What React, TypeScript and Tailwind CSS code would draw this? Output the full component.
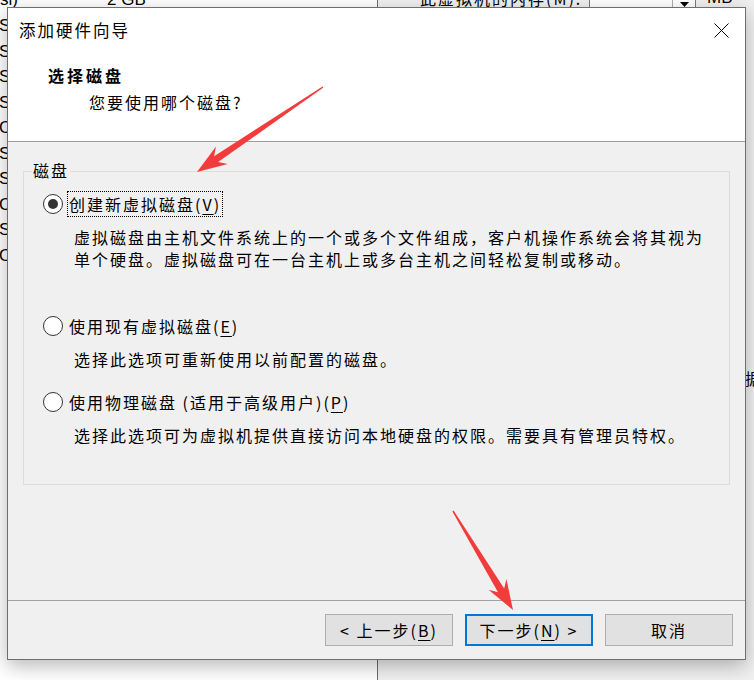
import React from "react";

const FONT = "font-['Noto_Sans_CJK_SC','Noto_Sans',sans-serif]";

// tapered red annotation arrow, tail -> tip
const arrowPoints = (x1: number, y1: number, x2: number, y2: number) => {
  const dx = x2 - x1;
  const dy = y2 - y1;
  const len = Math.hypot(dx, dy);
  const ux = dx / len;
  const uy = dy / len;
  const px = -uy;
  const py = ux;
  const pt = (d: number, w: number) =>
    `${(x2 - ux * d + px * w).toFixed(1)},${(y2 - uy * d + py * w).toFixed(1)}`;
  const head = 30;
  const neck = 23;
  return [
    pt(len, 0.7),
    pt(neck, 3.6),
    pt(head, 10.5),
    pt(0, 0),
    pt(head, -10.5),
    pt(neck, -3.6),
    pt(len, -0.7),
  ].join(" ");
};

const Key = ({ k }: { k: string }) => (
  <span className="underline underline-offset-[3px] decoration-1">{k}</span>
);

const Radio = ({ checked }: { checked?: boolean }) => (
  <div className="w-[20px] h-[20px] rounded-full border border-[#333333] bg-white flex items-center justify-center shrink-0">
    {checked && <div className="w-[10px] h-[10px] rounded-full bg-[#333333]" />}
  </div>
);

const Option = ({
  checked,
  label,
  lines,
  className,
}: {
  checked?: boolean;
  label: React.ReactNode;
  lines: string[];
  className?: string;
}) => (
  <div className={className}>
    <div className="flex items-center h-[26px]">
      <Radio checked={checked} />
      <span
        className={`ml-[4px] h-[26px] px-[1px] leading-[24px] border border-dotted ${
          checked ? "border-black" : "border-transparent"
        }`}
      >
        {label}
      </span>
    </div>
    <div className="ml-[31px] mt-[9px] leading-[22px]">
      {lines.map((l) => (
        <div key={l}>{l}</div>
      ))}
    </div>
  </div>
);

const Btn = ({ children, focused }: { children: React.ReactNode; focused?: boolean }) => (
  <button
    className={`w-[128px] h-[32px] bg-[#e1e1e1] flex items-center justify-center text-[16px] tracking-[2px] ${
      focused ? "border-2 border-[#0078d7]" : "border border-[#adadad]"
    }`}
  >
    {children}
  </button>
);

const leftRows = ["S:", "S:", "S:", "S:", "C:", "S:", "S:", "C:", "S:", "O"];

export default function App() {
  return (
    <div className={`relative w-[754px] h-[680px] overflow-hidden bg-white text-black ${FONT}`}>
      {/* settings window underneath */}
      <div className="absolute inset-0 flex font-['Liberation_Sans',sans-serif] text-[17px]">
        <div className="w-[378px] shrink-0 bg-white border-r border-[#6d6d6d] flex flex-col">
          <div className="h-[20px] -mt-[10px] flex items-center">
            <span className="w-[107px]">si)</span>
            <span>2 GB</span>
          </div>
          <div className="flex flex-col mt-[3px]">
            {leftRows.map((r, i) => (
              <div key={i} className="h-[25.5px] leading-[25px] -ml-[1px]">
                {r}
              </div>
            ))}
          </div>
        </div>
        <div className="flex-1 min-w-0 bg-[#f0f0f0] flex flex-col">
          <div className="h-[22px] -mt-[13px] flex items-center">
            <span className={`ml-[42px] w-[169px] shrink-0 text-[16px] tracking-[2px] ${FONT}`}>此虚拟机的内存(M):</span>
            <div className="h-[22px] w-[107px] shrink-0 border border-[#7a7a7a] bg-white flex justify-end">
              <div className="w-[23px] border-l border-[#adadad] flex items-end justify-center pb-[1px]">
                <svg width="9" height="5" viewBox="0 0 9 5">
                  <path d="M0 0 L9 0 L4.5 5 Z" fill="#000" />
                </svg>
              </div>
            </div>
            <span className="ml-[11px] shrink-0">MB</span>
          </div>
          <div className={`mt-[357px] ml-[367px] text-[16px] whitespace-nowrap ${FONT}`}>据</div>
        </div>
      </div>

      {/* wizard dialog */}
      <div className="absolute left-[7px] top-[7px] w-[739px] h-[653px] border border-[#6e6e6e] bg-[#f0f0f0] flex flex-col text-[16px] tracking-[2px] shadow-[0_6px_18px_rgba(0,0,0,0.28)]">
        <div className="h-[134px] bg-white border-b border-[#a0a0a0] flex flex-col">
          <div className="h-[44px] flex items-center justify-between pl-[11px] pr-[16px]">
            <span className="text-[16.5px]">添加硬件向导</span>
            <svg width="15" height="15" viewBox="0 0 15 15">
              <path d="M0.5 0.5 L14.5 14.5 M14.5 0.5 L0.5 14.5" stroke="#000" strokeWidth="1" />
            </svg>
          </div>
          <div className="pl-[40px] pt-[11px]">
            <div className="font-bold leading-[24px] tracking-[3px]">选择磁盘</div>
            <div className="pl-[41px] mt-[3px] leading-[24px]">您要使用哪个磁盘?</div>
          </div>
        </div>

        <div className="flex-1 px-[15px] pt-[29px]">
          <div className="relative h-[314px] border border-[#dcdcdc] pl-[19px] pt-[19px]">
            <span className="absolute left-[8px] -top-[13px] px-[1px] bg-[#f0f0f0] leading-[22px]">磁盘</span>
            <Option
              checked
              label={
                <>
                  创建新虚拟磁盘(<Key k="V" />)
                </>
              }
              lines={[
                "虚拟磁盘由主机文件系统上的一个或多个文件组成，客户机操作系统会将其视为",
                "单个硬盘。虚拟磁盘可在一台主机上或多台主机之间轻松复制或移动。",
              ]}
            />
            <Option
              className="mt-[43px]"
              label={
                <>
                  使用现有虚拟磁盘(<Key k="E" />)
                </>
              }
              lines={["选择此选项可重新使用以前配置的磁盘。"]}
            />
            <Option
              className="mt-[19px]"
              label={
                <>
                  使用物理磁盘 (适用于高级用户)(<Key k="P" />)
                </>
              }
              lines={["选择此选项可为虚拟机提供直接访问本地硬盘的权限。需要具有管理员特权。"]}
            />
          </div>
        </div>

        <div className="h-[59px] border-t border-[#a0a0a0] flex justify-end gap-[12px] pt-[13px] pr-[12px]">
          <Btn>
            &lt; 上一步(<Key k="B" />)
          </Btn>
          <Btn focused>
            下一步(<Key k="N" />) &gt;
          </Btn>
          <Btn>取消</Btn>
        </div>
      </div>

      {/* red annotation arrows */}
      <svg className="absolute inset-0 pointer-events-none" width="754" height="680" viewBox="0 0 754 680">
        <polygon points={arrowPoints(323, 87, 197, 172)} fill="#f23b3b" />
        <polygon points={arrowPoints(453, 511, 513, 610)} fill="#f23b3b" />
      </svg>
    </div>
  );
}
